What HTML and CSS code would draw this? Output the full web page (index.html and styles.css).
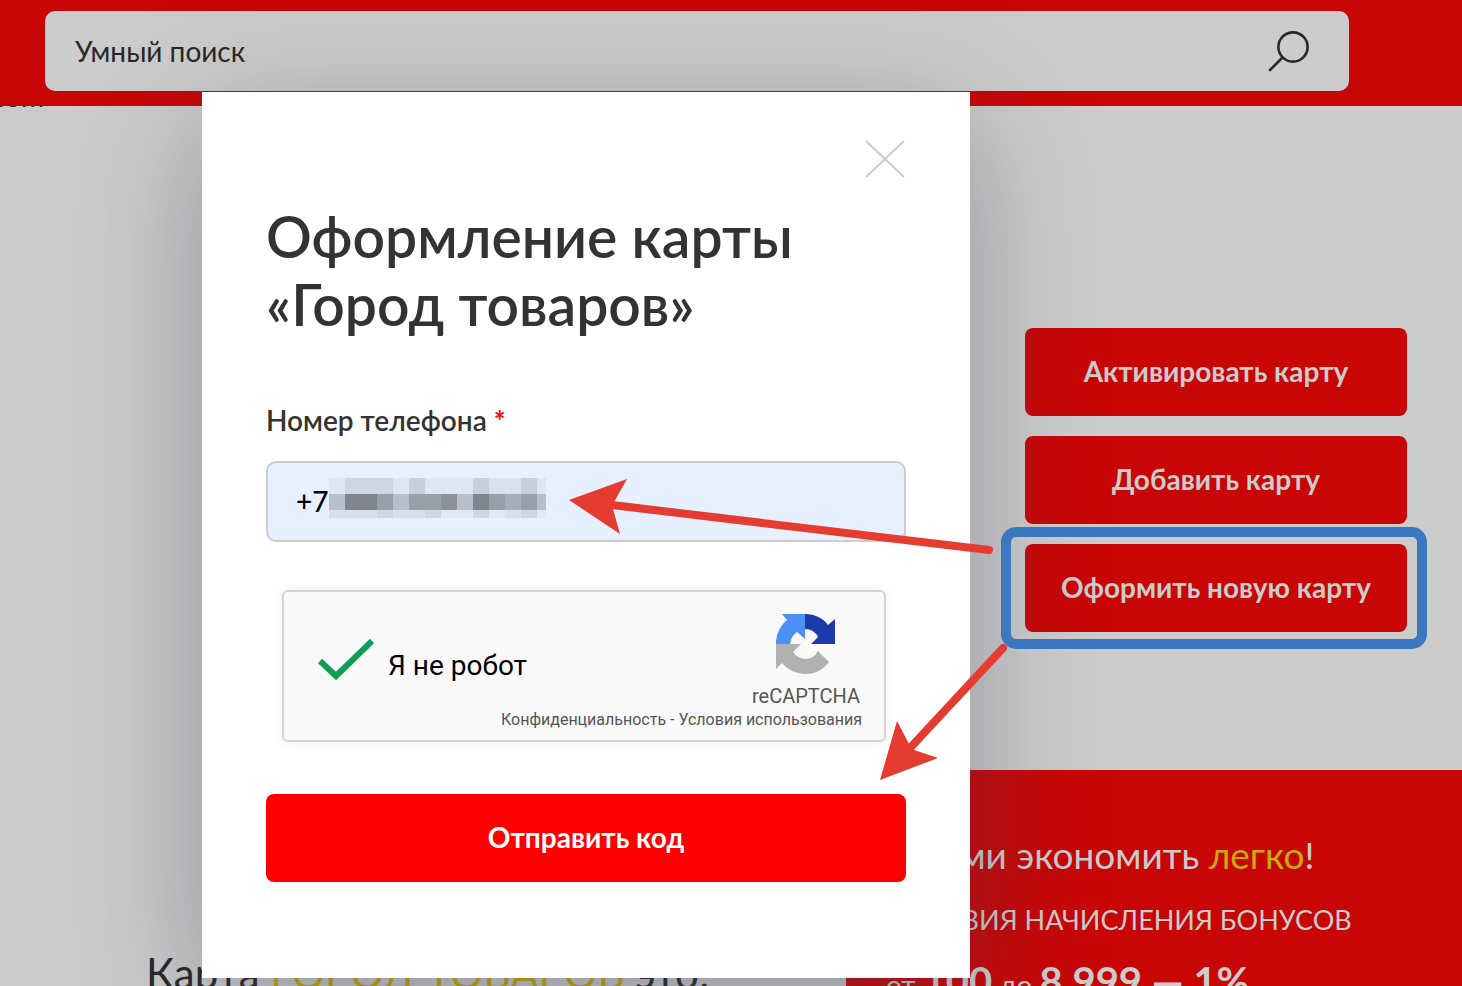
FILE: index.html
```html
<!DOCTYPE html>
<html lang="ru">
<head>
    <meta charset="UTF-8">
    <meta name="viewport" content="width=device-width, initial-scale=1.0">
    <title>Оформление карты «Город товаров»</title>
    <link rel="stylesheet" href="styles.css">
</head>
<body>
    <header class="header">
        <form class="search">
            <input class="search-input" type="text" placeholder="Умный поиск" aria-label="Умный поиск">
            <button class="search-button" type="button" aria-label="Найти">
                <svg width="42" height="42" viewBox="0 0 42 42" fill="none" stroke="#282828" stroke-width="2.6" stroke-linecap="round">
                    <circle cx="26" cy="17" r="14.6"/>
                    <path d="M15.5 27.5L3 40"/>
                </svg>
            </button>
        </form>
    </header>

    <main class="page">
        <div class="crumb">com</div>
        <div class="card-actions">
            <button class="action" type="button">Активировать карту</button>
            <button class="action" type="button">Добавить карту</button>
            <button class="action" type="button">Оформить новую карту</button>
        </div>
        <div class="promo">
            <h2 class="about-title">Карта <span class="gold">ГОРОД ТОВАРОВ</span> это:</h2>
            <section class="bonus">
                <p class="bonus-lead">С нами экономить <span class="gold">легко</span>!</p>
                <p class="bonus-caption">УСЛОВИЯ НАЧИСЛЕНИЯ БОНУСОВ</p>
                <p class="bonus-rate">от <b>100</b> до <b>8 999 — 1%</b></p>
            </section>
        </div>
    </main>

    <div class="modal-layer">
        <div class="modal" role="dialog" aria-labelledby="modalTitle">
            <button class="close" type="button" aria-label="Закрыть">
                <svg width="40" height="38" viewBox="0 0 40 38" stroke="#ccc" stroke-width="2">
                    <path d="M0 1L38 37M38 1L0 37"/>
                </svg>
            </button>
            <h1 class="modal-title" id="modalTitle">Оформление карты «Город товаров»</h1>
            <form>
                <label class="field-label" for="phone">Номер телефона <span class="required">*</span></label>
                <div class="phone-field">
                    <input class="phone-input" id="phone" type="tel" value="+7">
                    <svg class="phone-mask" width="217" height="40" viewBox="0 0 217 40" shape-rendering="crispEdges">
                        <rect width="217" height="40" fill="#d8e0ee"/>
                        <path fill="#dde6f3" d="M0 0h16v16H0zM64 0h16v16H64zM96 0h32v16H96zM128 0h16v16h-16zM208 0h9v16h-9z"/>
                        <path fill="#ced5e3" d="M16 0h48v16H16zM48 32h16v8H48zM96 32h16v8H96zM144 32h16v8h-16zM192 32h16v8h-16z"/>
                        <path fill="#c7cedd" d="M80 0h16v16H80zM144 0h16v16h-16zM192 0h16v16h-16z"/>
                        <path fill="#dfe8f6" d="M112 32h32v8h-32zM160 32h16v8h-16zM208 32h9v8h-9z"/>
                        <path fill="#b8bfcc" d="M0 16h16v16H0zM64 16h16v16H64zM128 16h16v16h-16zM208 16h9v16h-9z"/>
                        <path fill="#7f848e" d="M16 16h32v16H16zM144 16h16v16h-16z"/>
                        <path fill="#989fa9" d="M48 16h16v16H48zM80 16h32v16H80zM160 16h16v16h-16zM192 16h16v16h-16z"/>
                        <path fill="#8b9099" d="M112 16h16v16h-16z"/>
                        <path fill="#a6adba" d="M176 16h16v16h-16z"/>
                    </svg>
                </div>

                <div class="captcha">
                    <label class="captcha-check">
                        <input class="captcha-box" type="checkbox" checked>
                        <svg width="56" height="52" viewBox="0 0 56 52" fill="none" stroke="#0f9d58" stroke-width="6">
                            <path d="M2 22L18 37L54 2"/>
                        </svg>
                        <span>Я не робот</span>
                    </label>
                    <div class="captcha-brand">
                        <svg width="60" height="60" viewBox="0 0 60 60">
                            <path fill="#1c3aa9" d="M29 0C39 0 47 4 52 11L59 5V30H35L42 23Q38 15 29 15Z"/>
                            <path fill="#4a90f5" d="M29 0H6L11 6C4 12 0 20 0 30H14Q15 22 21 18L29 25Z"/>
                            <path fill="#b1b1b3" d="M0 30V55L6 49C12 56 20 60 30 60C39 60 47 56 53 48L42 37Q38 45 29 45Q21 44 17 38L25 30Z"/>
                        </svg>
                        <span>reCAPTCHA</span>
                    </div>
                    <div class="captcha-links">
                        <a href="#">Конфиденциальность</a> - <a href="#">Условия использования</a>
                    </div>
                </div>

                <button class="submit" type="button">Отправить код</button>
            </form>
        </div>
    </div>

    <svg class="notes" width="1462" height="986" viewBox="0 0 1462 986">
        <rect x="1006" y="532" width="416" height="112" rx="10" fill="none" stroke="#3a79bd" stroke-width="10"/>
        <g fill="#e63b30" stroke="none">
            <path d="M569 500L627 479L614 502L613 509L620 534Z"/>
            <path d="M880 780L897 721L909 744L914 750L938 758Z"/>
        </g>
        <g stroke="#e63b30" stroke-width="8" stroke-linecap="round">
            <path d="M612 505L989 550"/>
            <path d="M910 748L1003 648"/>
        </g>
    </svg>
</body>
</html>
```
FILE: styles.css
```css
* {
    box-sizing: border-box;
}
body {
    margin: 0;
    min-height: 100vh;
    position: relative;
    overflow: hidden;
    background: #ccc;
    color: #282828;
    font-family: Lato, "Noto Sans", sans-serif;
    font-size: 28px;
}
button {
    border: none;
    padding: 0;
    font: inherit;
    cursor: pointer;
}
svg {
    display: block;
}
.header {
    position: relative;
    z-index: 1;
    height: 106px;
    padding: 11px 113px 15px 45px;
    background: #c80606;
}
.search {
    display: flex;
    align-items: center;
    height: 80px;
    padding: 0 40px 0 30px;
    border-radius: 10px;
    background: #ccc;
}
.search-input {
    flex: 1;
    border: none;
    padding: 0;
    background: none;
    font: inherit;
    color: #282828;
}
.search-input::placeholder {
    color: #282828;
    opacity: 1;
}
.search-button {
    background: none;
}

/* page under the dialog */
.page {
    height: calc(100vh - 106px);
    overflow: hidden;
}
.crumb {
    height: 222px;
    margin: -28px 0 28px -8px;
    line-height: 36px;
}
.card-actions {
    display: flex;
    flex-direction: column;
    gap: 20px;
    width: 382px;
    margin: 0 55px 138px auto;
}
.action {
    height: 88px;
    padding-bottom: 2px;
    border-radius: 8px;
    background: #c80606;
    color: #ccc;
    font-weight: 700;
}
.promo {
    display: flex;
}
.about-title {
    width: 846px;
    margin: 0;
    padding: 178px 0 0 146px;
    font-size: 42px;
    line-height: 50px;
    font-weight: 400;
}
.gold {
    color: #c8a80c;
}
.bonus {
    flex: 1;
    padding: 60px 0 0 40px;
    background: #c80606;
    color: #ccc;
    white-space: nowrap;
}
.bonus p {
    margin: 0;
}
.bonus .bonus-lead {
    margin-bottom: 20px;
    font-size: 37px;
    line-height: 50px;
}
.bonus .bonus-caption {
    margin-bottom: 16px;
    font-size: 27px;
    line-height: 40px;
}
.bonus-rate b {
    font-size: 40px;
    line-height: 50px;
}

/* dialog */
.modal-layer {
    position: absolute;
    z-index: 2;
    top: 0;
    left: 0;
    padding: 92px 0 0 202px;
}
.modal {
    width: 768px;
    padding: 48px 64px 96px;
    background: #fff;
    box-shadow: 0 32px 120px rgba(60, 62, 84, 0.4);
}
.close {
    display: block;
    margin-left: auto;
    background: none;
}
.modal-title {
    margin: 24px 0 62px;
    color: #333;
    font-size: 57px;
    line-height: 68px;
    font-weight: 600;
}
.field-label {
    display: block;
    margin-bottom: 21px;
    color: #333;
    line-height: 40px;
    font-weight: 600;
}
.required {
    color: #f00;
    font-weight: 700;
}
.phone-field {
    position: relative;
}
.phone-input {
    display: block;
    width: 100%;
    height: 81px;
    padding: 0 28px 2px;
    border: 2px solid #ccc;
    border-radius: 10px;
    background: #e7f0fe;
    color: #000;
    font: inherit;
    font-weight: 500;
}
.phone-mask {
    position: absolute;
    left: 63px;
    top: 17px;
}
.captcha {
    display: grid;
    grid-template-columns: 1fr auto;
    align-content: start;
    width: 604px;
    height: 152px;
    margin: 48px 16px 52px;
    padding: 22px 22px 0 34px;
    border: 2px solid #d3d3d3;
    border-radius: 6px;
    background: #f9f9f9;
    box-shadow: 0 0 8px rgba(0, 0, 0, 0.08);
    color: #555;
    font-family: Roboto, sans-serif;
}
.captcha-check {
    display: flex;
    align-items: center;
    gap: 14px;
    padding-top: 8px;
    color: #000;
}
.captcha-box {
    appearance: none;
    width: 0;
    margin: 0 -14px 0 0;
}
.captcha-brand {
    display: flex;
    flex-direction: column;
    align-items: center;
    gap: 10px;
    margin-right: 2px;
    font-size: 20px;
    line-height: 24px;
}
.captcha-links {
    grid-column: 1 / 3;
    text-align: right;
    font-size: 16px;
    line-height: 24px;
}
.captcha-links a {
    color: inherit;
    text-decoration: none;
}
.submit {
    display: block;
    width: 100%;
    height: 88px;
    padding-bottom: 2px;
    border-radius: 8px;
    background: #f00;
    color: #fff;
    font-weight: 700;
}

/* arrows and frame drawn over everything */
.notes {
    position: absolute;
    z-index: 3;
    top: 0;
    left: 0;
    pointer-events: none;
}
```
